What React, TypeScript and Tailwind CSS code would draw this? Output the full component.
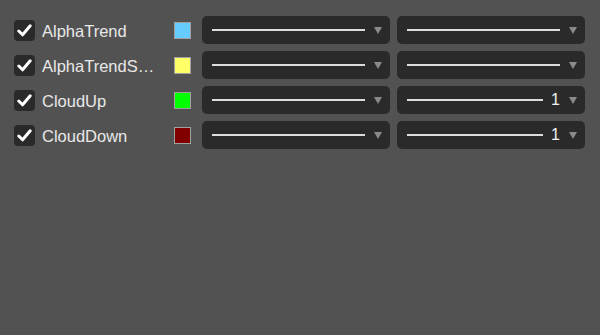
import React from 'react';

type Row = { name: string; color: string; value?: string };

const rows: Row[] = [
  { name: 'AlphaTrend', color: '#66ccff' },
  { name: 'AlphaTrendSignal', color: '#ffff66' },
  { name: 'CloudUp', color: '#00ff00', value: '1' },
  { name: 'CloudDown', color: '#800000', value: '1' },
];

function Arrow() {
  return (
    <svg width="8" height="7" viewBox="0 0 8 7" className="shrink-0">
      <path d="M0 0 H8 L4 7 Z" fill="#8a8a8a" />
    </svg>
  );
}

function Select({ value }: { value?: string }) {
  return (
    <div className="flex h-[28px] w-[188px] items-center rounded-[5px] bg-[#2a2a2a] pl-[10px] pr-[8px]">
      <div className="h-[2px] flex-1 bg-[#dcdcdc]" />
      {value ? (
        <span className="ml-[8px] text-[16px] leading-none text-[#f0f0f0]">{value}</span>
      ) : null}
      <span className="ml-[9px]">
        <Arrow />
      </span>
    </div>
  );
}

export default function App() {
  return (
    <div
      className="min-h-[335px] w-[600px] bg-[#525252] pt-[16px] pl-[14px]"
      style={{ fontFamily: '"Liberation Sans", Arial, sans-serif' }}
    >
      <div className="flex flex-col gap-[7px]">
        {rows.map((r) => (
          <div key={r.name} className="flex h-[28px] items-center">
            <div className="flex h-[21px] w-[21px] shrink-0 items-center justify-center rounded-[4px] bg-[#2a2a2a]">
              <svg width="15" height="13" viewBox="0 0 15 13">
                <path d="M1.8 7 L5.6 10.8 L13.2 1.8" fill="none" stroke="#ffffff" strokeWidth="3" strokeLinecap="round" strokeLinejoin="round" />
              </svg>
            </div>
            <div className="ml-[7px] w-[114px] truncate pt-[2px] text-[16.5px] leading-[20px] text-[#e8e8e8]">{r.name}</div>
            <div
              className="ml-[18px] h-[17px] w-[17px] shrink-0 border border-[#a0a0a0]"
              style={{ backgroundColor: r.color }}
            />
            <div className="ml-[11px] flex gap-[7px]">
              <Select />
              <Select value={r.value} />
            </div>
          </div>
        ))}
      </div>
    </div>
  );
}
